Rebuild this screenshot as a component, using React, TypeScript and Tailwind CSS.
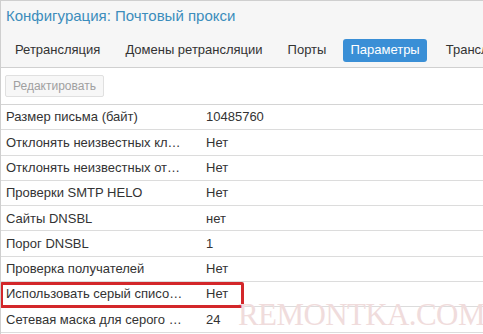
import React from "react";

const rows: [string, string][] = [
  ["Размер письма (байт)", "10485760"],
  ["Отклонять неизвестных кл…", "Нет"],
  ["Отклонять неизвестных от…", "Нет"],
  ["Проверки SMTP HELO", "Нет"],
  ["Сайты DNSBL", "нет"],
  ["Порог DNSBL", "1"],
  ["Проверка получателей", "Нет"],
  ["Использовать серый списо…", "Нет"],
  ["Сетевая маска для серого …", "24"],
];

export default function App() {
  return (
    <div
      className="w-[483px] h-[334px] overflow-hidden bg-white border-l border-t border-[#cfcfcf] relative text-[#333]"
      style={{ fontFamily: '"Liberation Sans", Arial, sans-serif' }}
    >
      <div className="bg-[#f6f6f6] border-b border-[#d0d0d0] h-[67px] flex flex-col">
        <div className="h-[30px] pl-[5px] flex items-center text-[15px] text-[#3c8dbc]">
          Конфигурация: Почтовый прокси
        </div>
        <div className="flex items-center h-[30px] mt-[4px] pl-[14px] gap-[25px] text-[13px] whitespace-nowrap">
          <span>Ретрансляция</span>
          <span>Домены ретрансляции</span>
          <span>Порты</span>
          <span className="bg-[#3a8fd6] text-white rounded-[3px] px-[7px] h-[23px] flex items-center -ml-[8px] -mr-[6px]">
            Параметры
          </span>
          <span>Трансляция</span>
        </div>
      </div>
      <div className="h-[37px] border-b border-[#d4d4d4] flex items-center pl-[4px]">
        <div className="h-[22px] w-[99px] border border-[#e0e0e0] bg-[#f7f7f7] rounded-[2px] flex items-center justify-center text-[12px] text-[#a0a0a0]">
          Редактировать
        </div>
      </div>
      <div className="flex flex-col">
        {rows.map(([k, v], i) => (
          <div
            key={i}
            className="h-[25.3px] border-b border-[#dcdcdc] flex items-center text-[13px] relative"
          >
            <div className="w-[200px] shrink-0 pl-[5px] whitespace-nowrap overflow-hidden">{k}</div>
            <div className="pl-[5px]">{v}</div>
            {i === 7 && (
              <div className="absolute left-[-1px] top-[0px] w-[244px] h-[26px] border-[3px] border-[#d3272a] rounded-[2px]" />
            )}
          </div>
        ))}
      </div>
      <div
        className="absolute left-[237px] top-[298px] text-[31px] leading-none text-[#f0dcdc] tracking-[-0.6px] whitespace-nowrap"
        style={{ fontFamily: '"Liberation Serif", "Times New Roman", serif' }}
      >
        REMONTKA.COM
      </div>
    </div>
  );
}
